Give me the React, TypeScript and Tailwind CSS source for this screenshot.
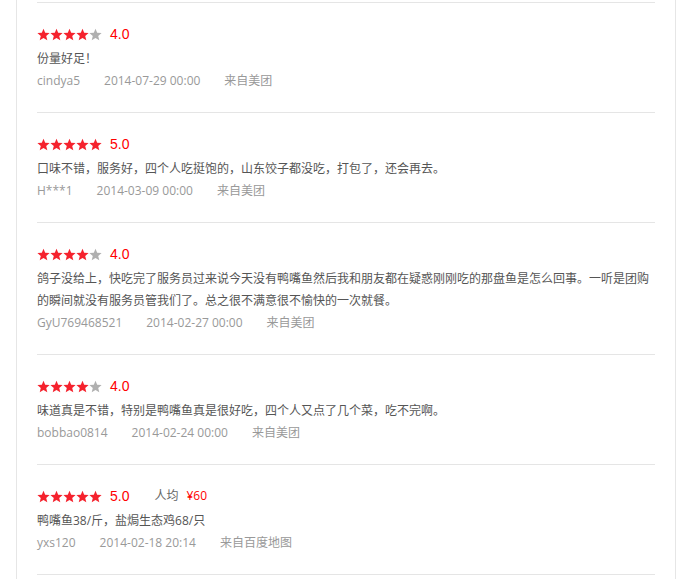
import React from 'react';

type Review = {
  score: number;
  text: string;
  user: string;
  time: string;
  source: string;
  price?: string;
};

const reviews: Review[] = [
  { score: 4, text: '份量好足！', user: 'cindya5', time: '2014-07-29 00:00', source: '来自美团' },
  { score: 5, text: '口味不错，服务好，四个人吃挺饱的，山东饺子都没吃，打包了，还会再去。', user: 'H***1', time: '2014-03-09 00:00', source: '来自美团' },
  {
    score: 4,
    text: '鸽子没给上，快吃完了服务员过来说今天没有鸭嘴鱼然后我和朋友都在疑惑刚刚吃的那盘鱼是怎么回事。一听是团购的瞬间就没有服务员管我们了。总之很不满意很不愉快的一次就餐。',
    user: 'GyU769468521',
    time: '2014-02-27 00:00',
    source: '来自美团',
  },
  { score: 4, text: '味道真是不错，特别是鸭嘴鱼真是很好吃，四个人又点了几个菜，吃不完啊。', user: 'bobbao0814', time: '2014-02-24 00:00', source: '来自美团' },
  { score: 5, text: '鸭嘴鱼38/斤，盐焗生态鸡68/只', user: 'yxs120', time: '2014-02-18 20:14', source: '来自百度地图', price: '¥60' },
];

function Star({ on }: { on: boolean }) {
  return (
    <svg width="13" height="13" viewBox="0 0 24 24" className={on ? 'text-[#f5222d]' : 'text-[#b0b0b0]'}>
      <path
        fill="currentColor"
        d="M12 1.2l3.1 7.6 8.2.6-6.3 5.3 2 8-7-4.4-7 4.4 2-8L.7 9.4l8.2-.6z"
      />
    </svg>
  );
}

function Stars({ score }: { score: number }) {
  return (
    <div className="flex items-center">
      {[1, 2, 3, 4, 5].map((i) => (
        <Star key={i} on={i <= score} />
      ))}
    </div>
  );
}

export default function App() {
  return (
    <div className="min-h-[579px] bg-white font-['Open_Sans','Noto_Sans_CJK_SC',sans-serif]">
      <div className="ml-4 w-[660px] min-h-[579px] border-x border-[#e6e6e6] px-5 pt-[2px]">
        {reviews.map((r, idx) => (
          <div key={idx} className="border-t border-[#e5e5e5] pt-[22px] pb-[20px]">
            <div className="flex h-[18px] items-center">
              <Stars score={r.score} />
              <span className="ml-[8px] font-['Liberation_Sans',sans-serif] text-[14px] leading-none text-[#ff0000]">
                {r.score}.0
              </span>
              {r.price && (
                <>
                  <span className="ml-[25px] text-[12px] text-[#666]">人均</span>
                  <span className="ml-[8px] text-[12px] text-[#ff0000]">{r.price}</span>
                </>
              )}
            </div>
            <p className="mt-[5px] text-[12px] leading-[22px] text-[#555]">{r.text}</p>
            <div className="flex gap-6 text-[12px] leading-[22px] text-[#999]">
              <span>{r.user}</span>
              <span>{r.time}</span>
              <span>{r.source}</span>
            </div>
          </div>
        ))}
        <div className="border-t border-[#e5e5e5]" />
      </div>
    </div>
  );
}
